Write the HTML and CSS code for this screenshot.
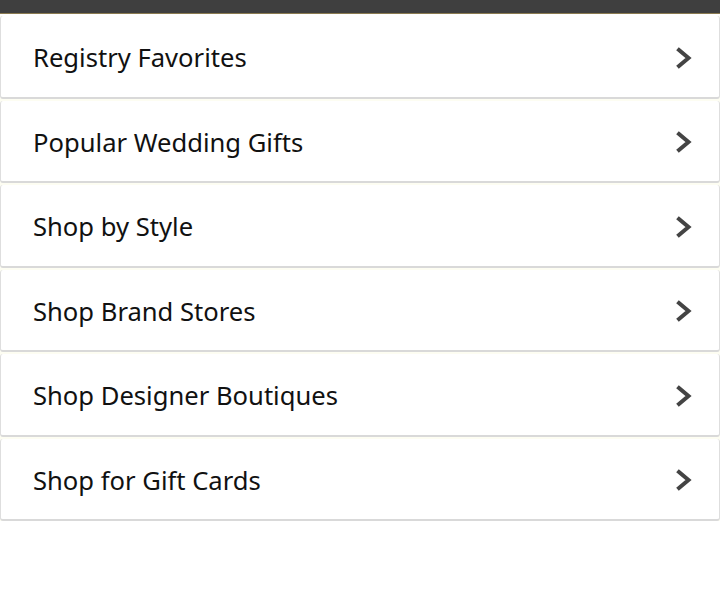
FILE: index.html
```html
<!DOCTYPE html>
<html>
<head>
<meta charset="utf-8">
<link rel="stylesheet" href="styles.css">
</head>
<body>
<div class="topbar"></div>
<ul class="menu">
  <li class="item"><span class="label">Registry Favorites</span><svg class="chev" viewBox="0 0 16 22"><path d="M3 3 L12.5 11 L3 19"/></svg></li>
  <li class="item"><span class="label">Popular Wedding Gifts</span><svg class="chev" viewBox="0 0 16 22"><path d="M3 3 L12.5 11 L3 19"/></svg></li>
  <li class="item"><span class="label">Shop by Style</span><svg class="chev" viewBox="0 0 16 22"><path d="M3 3 L12.5 11 L3 19"/></svg></li>
  <li class="item"><span class="label">Shop Brand Stores</span><svg class="chev" viewBox="0 0 16 22"><path d="M3 3 L12.5 11 L3 19"/></svg></li>
  <li class="item"><span class="label">Shop Designer Boutiques</span><svg class="chev" viewBox="0 0 16 22"><path d="M3 3 L12.5 11 L3 19"/></svg></li>
  <li class="item"><span class="label">Shop for Gift Cards</span><svg class="chev" viewBox="0 0 16 22"><path d="M3 3 L12.5 11 L3 19"/></svg></li>
</ul>
</body>
</html>
```
FILE: styles.css
```css
html, body {
  margin: 0;
  padding: 0;
  height: 100%;
}
body {
  background: #fff;
  font-family: "Noto Sans", "Open Sans", sans-serif;
  color: #111;
}
.topbar {
  height: 13px;
  background: #3f3f3f;
  border-bottom: 1px solid #8a7a50;
  margin-bottom: 2px;
}
.menu {
  list-style: none;
  margin: 0;
  padding: 0;
  display: flex;
  flex-direction: column;
  gap: 2px;
  background: #fdfdf2;
}
.item {
  background: #fff;
  border: 1px solid #dedede;
  border-top: none;
  border-bottom: 2px solid #d9d9d9;
  border-radius: 3px;
  display: flex;
  align-items: center;
  justify-content: space-between;
  padding: 3px 27px 0 32px;
  height: 77.5px;
}
.label {
  font-size: 25.6px;
}
.chev {
  width: 16px;
  height: 22px;
  fill: none;
  stroke: #444;
  stroke-width: 4;
  stroke-linecap: square;
}
```
